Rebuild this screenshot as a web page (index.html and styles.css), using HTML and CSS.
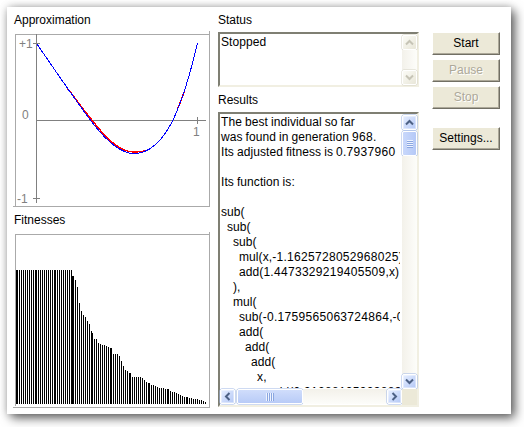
FILE: index.html
```html
<!DOCTYPE html>
<html lang="en">
<head>
<meta charset="utf-8">
<title>Genetic programming</title>
<link rel="stylesheet" href="styles.css">
</head>
<body>
<div class="window">
  <div class="col-left">
    <div class="label">Approximation</div>
    <div class="plot plot-top">
      <svg class="plot-svg" width="198" height="177" viewBox="13 31 198 177">
        <path class="axis" d="M36.5 34V203M36.5 120.5H206M33 43.5H40M33 198.500H40M197.500 117V124"/>
        <text class="tick" x="19" y="48">+1</text>
        <text class="tick" x="22" y="119">0</text>
        <text class="tick" x="17" y="203">-1</text>
        <text class="tick" x="193" y="136">1</text>
        <path class="red" d="M68 89C75 98 85 112 94 122.500C105 137 120 152 134 152C140 152 146 151 150 149M178 108C180 103 182 98 184 92"/>
        <path class="blue" d="M36.700 43.700C55 70 75 100 93 123.500C105 139 120 153.500 134 153.500C150 153.500 163 140 173 120C182 101 190 75 197.500 43"/>
      </svg>
    </div>
    <div class="label label-fit">Fitnesses</div>
    <div class="plot plot-bottom">
      <svg class="plot-svg" width="198" height="176" viewBox="13 232 198 176">
        <path class="bars" d="M16.500 270V404M17.500 270V404M19.500 270V404M21.500 270V404M23.500 270V404M25.500 270V404M27.500 270V404M29.500 270V404M31.500 270V404M33.500 270V404M35.500 270V404M36.500 270V404M38.500 270V404M40.500 270V404M42.500 270V404M44.500 270V404M46.500 270V404M48.500 270V404M50.500 270V404M52.500 270V404M54.500 270V404M55.500 270V404M57.500 270V404M59.500 270V404M61.500 270V404M63.500 270V404M65.500 270V404M67.500 270V404M69.500 270V404M71.500 270V404M72.500 276V404M73.500 276V404M75.500 280V404M77.500 287V404M79.500 303V404M81.500 311V404M83.500 315V404M85.500 317V404M87.500 321V404M89.500 324V404M91.500 331V404M92.500 333V404M94.500 339V404M96.500 339V404M98.500 343V404M100.500 344V404M102.500 345V404M104.500 345V404M106.500 346V404M108.500 347V404M110.500 348V404M111.500 348V404M113.500 354V404M115.500 354V404M117.500 354V404M119.500 356V404M121.500 361V404M123.500 366V404M125.500 370V404M127.500 371V404M129.500 373V404M130.500 373V404M132.500 377V404M134.500 377V404M136.500 377V404M138.500 377V404M140.500 377V404M142.500 378V404M144.500 380V404M146.500 382V404M148.500 383V404M149.500 383V404M151.500 385V404M153.500 385V404M155.500 386V404M157.500 387V404M159.500 388V404M161.500 388V404M163.500 388V404M165.500 389V404M167.500 389V404M168.500 389V404M170.500 391V404M172.500 392V404M174.500 392V404M176.500 393V404M178.500 394V404M180.500 395V404M182.500 396V404M184.500 397V404M186.500 397V404M187.500 397V404M189.500 398V404M191.500 398V404M193.500 399V404M195.500 399V404M197.500 399V404M199.500 400V404M201.500 400V404M203.500 401V404M205.500 402V404"/>
      </svg>
    </div>
  </div>

  <div class="col-mid">
    <div class="label">Status</div>
    <div class="textbox status">
      <div class="viewport"><div class="ln">Stopped</div></div>
      <div class="vbar off">
        <div class="sbtn"><svg width="9" height="7" viewBox="0 0 9 7"><path class="chev" d="M1 5.500L4.500 2L8 5.500"/></svg></div>
        <div class="track"></div>
        <div class="sbtn"><svg width="9" height="7" viewBox="0 0 9 7"><path class="chev" d="M1 1.500L4.500 5L8 1.500"/></svg></div>
      </div>
    </div>
    <div class="label label-res">Results</div>
    <div class="textbox results">
      <div class="viewport">
        <div class="ln">The best individual so far</div>
        <div class="ln">was found in generation <span class="num">968</span>.</div>
        <div class="ln">Its adjusted fitness is <span class="num">0.7937960</span></div>
        <div class="ln"></div>
        <div class="ln">Its function is:</div>
        <div class="ln"></div>
        <div class="ln">sub(</div>
        <div class="ln">  sub(</div>
        <div class="ln">    sub(</div>
        <div class="ln">      mul(x,<span class="num">-1.1625728052968025</span>),</div>
        <div class="ln">      add(<span class="num">1.4473329219405509</span>,x)</div>
        <div class="ln">    ),</div>
        <div class="ln">    mul(</div>
        <div class="ln">      sub(<span class="num">-0.1759565063724864</span>,-0.8),</div>
        <div class="ln">      add(</div>
        <div class="ln">        add(</div>
        <div class="ln">          add(</div>
        <div class="ln">            x,</div>
        <div class="ln">                add(<span class="num">0.9128812592388347</span></div>
      </div>
      <div class="vbar on">
        <div class="sbtn"><svg width="9" height="7" viewBox="0 0 9 7"><path class="chev" d="M1 5.500L4.500 2L8 5.500"/></svg></div>
        <div class="thumb-v"><span class="grip-v"></span></div>
        <div class="track"></div>
        <div class="sbtn"><svg width="9" height="7" viewBox="0 0 9 7"><path class="chev" d="M1 1.500L4.500 5L8 1.500"/></svg></div>
      </div>
      <div class="hbar">
        <div class="sbtn"><svg width="7" height="9" viewBox="0 0 7 9"><path class="chev" d="M5.500 1L2 4.500L5.500 8"/></svg></div>
        <div class="thumb-h"><span class="grip-h"></span></div>
        <div class="track"></div>
        <div class="sbtn"><svg width="7" height="9" viewBox="0 0 7 9"><path class="chev" d="M1.500 1L5 4.500L1.500 8"/></svg></div>
      </div>
      <div class="corner"></div>
    </div>
  </div>

  <div class="col-right">
    <button class="btn">Start</button>
    <button class="btn" disabled>Pause</button>
    <button class="btn" disabled>Stop</button>
    <button class="btn btn-settings">Settings...</button>
  </div>
</div>
</body>
</html>
```
FILE: styles.css
```css
* { box-sizing: border-box; }
html, body { margin: 0; height: 100%; }
body {
  background: #fff;
  padding: 7px 0 0 7px;
  font: 12px/15px "Liberation Sans", Arial, sans-serif;
  color: #000;
  overflow: hidden;
}
.window {
  width: 504px;
  height: 407px;
  background: #fff;
  box-shadow: 4px 4px 10px rgba(0,0,0,.6), 0 0 8px rgba(0,0,0,.2);
  display: flex;
  padding-top: 6px;
}
.label { height: 15px; }
.col-left {
  width: 204px;
  padding-left: 7px;
  flex: none;
}
.plot { margin-left: -1px; width: 198px; }
.plot-top { margin-top: 3px; height: 177px; }
.plot-svg { display: block; background: #fff; }
.label-fit { margin-top: 5px; }
.plot-bottom { margin-top: 4px; height: 176px; }
.plot-top .plot-svg {
  background:
    linear-gradient(#aaa,#aaa) 2px 3px/194px 1px no-repeat,
    linear-gradient(#aaa,#aaa) 2px 3px/1px 172px no-repeat,
    linear-gradient(#aaa,#aaa) 0 175px/197px 1px no-repeat,
    linear-gradient(#aaa,#aaa) 196px 0/1px 176px no-repeat;
}
.plot-bottom .plot-svg {
  background:
    linear-gradient(#aaa,#aaa) 2px 2px/194px 1px no-repeat,
    linear-gradient(#aaa,#aaa) 2px 2px/1px 172px no-repeat,
    linear-gradient(#aaa,#aaa) 0 175px/197px 1px no-repeat,
    linear-gradient(#aaa,#aaa) 196px 0/1px 176px no-repeat;
}
.axis { stroke: #808080; stroke-width: 1; fill: none; shape-rendering: crispEdges; }
.tick { font: 12px "Liberation Sans", Arial, sans-serif; fill: #808080; }
.red, .blue { fill: none; stroke-width: 1; shape-rendering: crispEdges; }
.red { stroke: #f00; stroke-width: 1.4; }
.blue { stroke: #00f; }
.bars { stroke: #000; stroke-width: 1; fill: none; shape-rendering: crispEdges; }

.col-mid { width: 201px; margin-left: 7px; flex: none; }
.textbox {
  border: 2px solid;
  border-color: #7f7f73 #f1efe2 #f1efe2 #7f7f73;
  display: grid;
  grid-template-columns: 1fr 15px;
  background: #fff;
}
.status { height: 55px; margin-top: 4px; }
.label-res { margin-top: 6px; }
.results { height: 295px; margin-top: 4px; grid-template-rows: 1fr 16px; }
.viewport { overflow: hidden; padding: 1px 0 0 1px; margin: 0 2px 1px 0; min-width: 0; min-height: 0; }
.ln {
  height: 15px;
  white-space: pre;
  letter-spacing: .08px;
  word-spacing: -.41px;
}
.num { letter-spacing: .3px; }
.vbar, .hbar { display: flex; background: #fbfbf7; min-height: 0; }
.vbar { flex-direction: column; width: 15px; padding-top: 1px; }
.hbar { height: 15px; }
.track { flex: 1; background: linear-gradient(90deg, #f3f1ea, #fdfdfa); }
.hbar .track { background: linear-gradient(#f3f1ea, #fdfdfa); }
.sbtn {
  width: 15px;
  height: 15px;
  flex: none;
  display: flex;
  align-items: center;
  justify-content: center;
  border: 1px solid #fff;
  border-radius: 2px;
  background: linear-gradient(135deg, #e6eeff, #b4c8f6);
  box-shadow: inset 0 0 0 1px rgba(255,255,255,.4), 0 0 0 .5px #9db6e6;
}
.chev { fill: none; stroke: #4d6185; stroke-width: 2; }
.vbar.off .sbtn {
  background: linear-gradient(135deg, #fbfbf6, #e8e6d8);
  box-shadow: 0 0 0 .5px #d5d3c5;
}
.vbar.off .chev { stroke: #c6c4b6; }
.thumb-v, .thumb-h {
  display: flex;
  align-items: center;
  justify-content: center;
  border: 1px solid #fff;
  border-radius: 2px;
  box-shadow: 0 0 0 .5px #9db6e6;
  flex: none;
}
.thumb-v { height: 25px; margin-top: 1px; background: linear-gradient(90deg, #c9d8fb, #b5c9f7); }
.thumb-h { width: 66px; margin-left: 2px; background: linear-gradient(#d0ddfb, #b8cbf7); }
.grip-v {
  width: 6px;
  height: 8px;
  background: repeating-linear-gradient(#eef3ff 0 1px, #8aa6e0 1px 2px);
}
.grip-h {
  width: 8px;
  height: 8px;
  background: repeating-linear-gradient(90deg, #eef3ff 0 1px, #8aa6e0 1px 2px);
}
.corner { background: #ece9d8; }

.col-right {
  margin-left: 13px;
  width: 68px;
  flex: none;
  display: flex;
  flex-direction: column;
  padding-top: 19px;
}
.btn {
  width: 68px;
  height: 23px;
  margin: 0 0 4px;
  padding: 0;
  font: 12px/15px "Liberation Sans", Arial, sans-serif;
  color: #000;
  background: #ece9d8;
  border: 1px solid;
  border-color: #fff #716f64 #716f64 #fff;
  box-shadow: inset -1px -1px 0 #aca899;
}
.btn:disabled { color: #aca899; text-shadow: 1px 1px 0 #fff; }
.btn-settings { margin-top: 14px; }
```
